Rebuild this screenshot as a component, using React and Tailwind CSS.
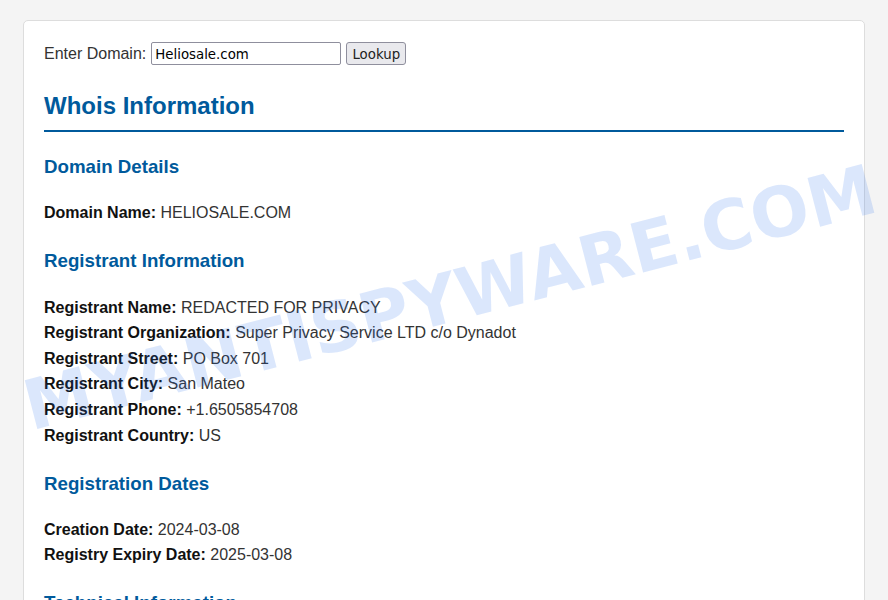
import React, { useState } from "react";

const sections = [
    {
        title: "Domain Details",
        rows: [["Domain Name", "HELIOSALE.COM"]],
    },
    {
        title: "Registrant Information",
        rows: [
            ["Registrant Name", "REDACTED FOR PRIVACY"],
            ["Registrant Organization", "Super Privacy Service LTD c/o Dynadot"],
            ["Registrant Street", "PO Box 701"],
            ["Registrant City", "San Mateo"],
            ["Registrant Phone", "+1.6505854708"],
            ["Registrant Country", "US"],
        ],
    },
    {
        title: "Registration Dates",
        rows: [
            ["Creation Date", "2024-03-08"],
            ["Registry Expiry Date", "2025-03-08"],
        ],
    },
    {
        title: "Technical Information",
        rows: [
            ["Name Server", "NS1.DYNADOT.COM"],
            ["Name Server", "NS2.DYNADOT.COM"],
        ],
    },
];

const App = () => {
    const [domain, setDomain] = useState("Heliosale.com");

    return (
        <div className="relative min-h-screen overflow-hidden bg-[#f4f4f4] pt-5 font-['Liberation_Sans',Arial,sans-serif] leading-[1.6] text-[#333]">
            <div className="mx-auto box-content max-w-[800px] rounded-[5px] border border-[#ddd] bg-white p-5">
                <form
                    className="flex h-[25.6px] items-center text-[16px]"
                    onSubmit={(e) => e.preventDefault()}
                >
                    <label htmlFor="domain">Enter Domain:</label>
                    <input
                        id="domain"
                        value={domain}
                        onChange={(e) => setDomain(e.target.value)}
                        className="ml-[5px] h-[23px] w-[190px] rounded-[2px] border border-[#8f8f9d] bg-white px-[3px] pt-[1px] font-['DejaVu_Sans',sans-serif] text-[13.33px] leading-none text-black outline-none"
                    />
                    <button
                        type="submit"
                        className="ml-[5px] h-[23px] w-[60px] rounded-[3px] border border-[#8f8f9d] bg-[#e9e9ed] pt-[1px] font-['DejaVu_Sans',sans-serif] text-[13.33px] leading-none text-[#222]"
                    >
                        Lookup
                    </button>
                </form>

                <h1 className="mt-[25px] border-b-2 border-[#005a9c] pb-[10px] text-[24px] leading-[normal] font-bold text-[#005a9c]">
                    Whois Information
                </h1>

                {sections.map((section) => (
                    <div key={section.title}>
                        <h3 className="mt-[24.4px] mb-[22.3px] text-[18.72px] leading-[normal] font-bold text-[#005a9c]">
                            {section.title}
                        </h3>
                        {section.rows.map(([label, value], i) => (
                            <p key={i} className="text-[16px]">
                                <strong className="font-bold text-[#111]">{label}:</strong> {value}
                            </p>
                        ))}
                    </div>
                ))}
            </div>

            {/* watermark over the page */}
            <span className="pointer-events-none absolute top-[298px] left-[450px] -translate-x-1/2 -translate-y-1/2 rotate-[-14.5deg] whitespace-nowrap font-['DejaVu_Sans',sans-serif] text-[69px] leading-none font-bold text-[rgba(40,110,240,0.17)] select-none">
                MYANTISPYWARE.COM
            </span>
        </div>
    );
};

export default App;
